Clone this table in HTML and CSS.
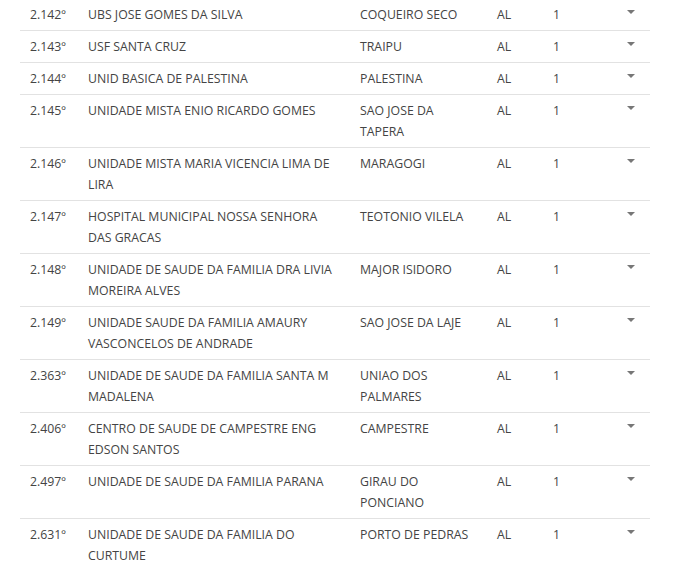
FILE: index.html
```html
<!DOCTYPE html>
<html lang="pt-BR">
<head>
<meta charset="utf-8">
<title>Ranking</title>
<link rel="stylesheet" href="styles.css">
</head>
<body>
<div class="table">
  <div class="row"><div class="rank">2.142º</div><div class="name">UBS JOSE GOMES DA SILVA</div><div class="city">COQUEIRO SECO</div><div class="uf">AL</div><div class="count">1</div><div class="caret"></div></div>
  <div class="row"><div class="rank">2.143º</div><div class="name">USF SANTA CRUZ</div><div class="city">TRAIPU</div><div class="uf">AL</div><div class="count">1</div><div class="caret"></div></div>
  <div class="row"><div class="rank">2.144º</div><div class="name">UNID BASICA DE PALESTINA</div><div class="city">PALESTINA</div><div class="uf">AL</div><div class="count">1</div><div class="caret"></div></div>
  <div class="row"><div class="rank">2.145º</div><div class="name">UNIDADE MISTA ENIO RICARDO GOMES</div><div class="city">SAO JOSE DA TAPERA</div><div class="uf">AL</div><div class="count">1</div><div class="caret"></div></div>
  <div class="row"><div class="rank">2.146º</div><div class="name">UNIDADE MISTA MARIA VICENCIA LIMA DE LIRA</div><div class="city">MARAGOGI</div><div class="uf">AL</div><div class="count">1</div><div class="caret"></div></div>
  <div class="row"><div class="rank">2.147º</div><div class="name">HOSPITAL MUNICIPAL NOSSA SENHORA DAS GRACAS</div><div class="city">TEOTONIO VILELA</div><div class="uf">AL</div><div class="count">1</div><div class="caret"></div></div>
  <div class="row"><div class="rank">2.148º</div><div class="name">UNIDADE DE SAUDE DA FAMILIA DRA LIVIA MOREIRA ALVES</div><div class="city">MAJOR ISIDORO</div><div class="uf">AL</div><div class="count">1</div><div class="caret"></div></div>
  <div class="row"><div class="rank">2.149º</div><div class="name">UNIDADE SAUDE DA FAMILIA AMAURY VASCONCELOS DE ANDRADE</div><div class="city">SAO JOSE DA LAJE</div><div class="uf">AL</div><div class="count">1</div><div class="caret"></div></div>
  <div class="row"><div class="rank">2.363º</div><div class="name">UNIDADE DE SAUDE DA FAMILIA SANTA M MADALENA</div><div class="city">UNIAO DOS PALMARES</div><div class="uf">AL</div><div class="count">1</div><div class="caret"></div></div>
  <div class="row"><div class="rank">2.406º</div><div class="name">CENTRO DE SAUDE DE CAMPESTRE ENG EDSON SANTOS</div><div class="city">CAMPESTRE</div><div class="uf">AL</div><div class="count">1</div><div class="caret"></div></div>
  <div class="row"><div class="rank">2.497º</div><div class="name">UNIDADE DE SAUDE DA FAMILIA PARANA</div><div class="city">GIRAU DO PONCIANO</div><div class="uf">AL</div><div class="count">1</div><div class="caret"></div></div>
  <div class="row"><div class="rank">2.631º</div><div class="name">UNIDADE DE SAUDE DA FAMILIA DO CURTUME</div><div class="city">PORTO DE PEDRAS</div><div class="uf">AL</div><div class="count">1</div><div class="caret"></div></div>
</div>
</body>
</html>
```

FILE: styles.css
```css
html, body {
  margin: 0;
  padding: 0;
  background: #fff;
}
body {
  font-family: "Open Sans", "Noto Sans", sans-serif;
  font-size: 12.3px;
  color: #444;
}
.table {
  width: 630px;
  margin: -1px 0 0 20px;
}
.row {
  display: grid;
  grid-template-columns: 58px 272px 137px 56px 74px 1fr;
  padding: 5px 0 5px 10px;
  line-height: 21px;
  border-bottom: 1px solid #e2e2e2;
}
.name {
  padding-right: 22px;
}
.city {
  padding-right: 24px;
}
.caret {
  position: relative;
}
.caret::after {
  content: "";
  position: absolute;
  left: 0;
  top: 6px;
  border-left: 4px solid transparent;
  border-right: 4px solid transparent;
  border-top: 4px solid #777;
}
```
